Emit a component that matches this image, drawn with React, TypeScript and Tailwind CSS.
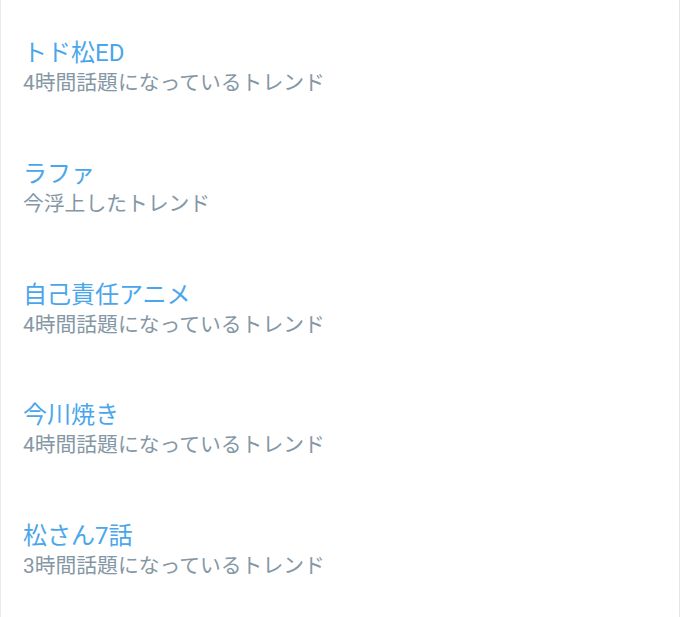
const TRENDS = [
  { name: "トド松ED", desc: "4時間話題になっているトレンド" },
  { name: "ラファ", desc: "今浮上したトレンド" },
  { name: "自己責任アニメ", desc: "4時間話題になっているトレンド" },
  { name: "今川焼き", desc: "4時間話題になっているトレンド" },
  { name: "松さん7話", desc: "3時間話題になっているトレンド" },
];

export default function App() {
  return (
    <div
      className="w-[680px] h-[617px] bg-white border-l border-r border-l-[#e6ecf0] border-r-[#e4e4e4] overflow-hidden"
      style={{ fontFamily: '"Roboto", "Noto Sans CJK JP", sans-serif' }}
    >
      {TRENDS.map(t => (
        <div key={t.name} className="pl-[22px] pt-[38px] pb-[22.75px]">
          <p className="text-[24px] leading-[30px] text-[#4aa6ec]">{t.name}</p>
          <p className="text-[20.8px] leading-[30px] text-[#8597a5]">{t.desc}</p>
        </div>
      ))}
    </div>
  );
}
